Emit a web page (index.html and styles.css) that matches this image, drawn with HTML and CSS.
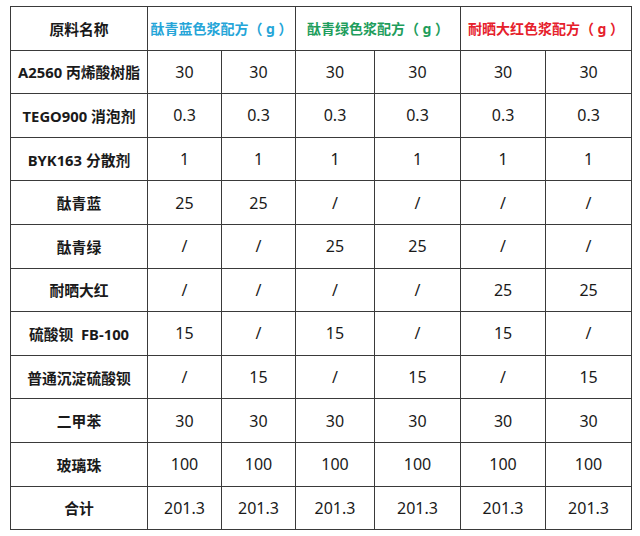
FILE: index.html
```html
<!DOCTYPE html>
<html lang="zh-CN">
<head>
<meta charset="utf-8">
<link rel="stylesheet" href="styles.css">
</head>
<body>
<table class="recipe">
  <colgroup>
    <col class="c-name">
    <col class="c1"><col class="c2"><col class="c3"><col class="c4"><col class="c5"><col class="c6">
  </colgroup>
  <thead>
    <tr>
      <th class="name">原料名称</th>
      <th colspan="2" class="head blue">酞青蓝色浆配方（ g ）</th>
      <th colspan="2" class="head green">酞青绿色浆配方（ g ）</th>
      <th colspan="2" class="head red">耐晒大红色浆配方（ g ）</th>
    </tr>
  </thead>
  <tbody>
    <tr><th class="name">A2560 丙烯酸树脂</th><td>30</td><td>30</td><td>30</td><td>30</td><td>30</td><td>30</td></tr>
    <tr><th class="name">TEGO900 消泡剂</th><td>0.3</td><td>0.3</td><td>0.3</td><td>0.3</td><td>0.3</td><td>0.3</td></tr>
    <tr><th class="name">BYK163 分散剂</th><td>1</td><td>1</td><td>1</td><td>1</td><td>1</td><td>1</td></tr>
    <tr><th class="name">酞青蓝</th><td>25</td><td>25</td><td>/</td><td>/</td><td>/</td><td>/</td></tr>
    <tr><th class="name">酞青绿</th><td>/</td><td>/</td><td>25</td><td>25</td><td>/</td><td>/</td></tr>
    <tr><th class="name">耐晒大红</th><td>/</td><td>/</td><td>/</td><td>/</td><td>25</td><td>25</td></tr>
    <tr><th class="name">硫酸钡&nbsp; FB-100</th><td>15</td><td>/</td><td>15</td><td>/</td><td>15</td><td>/</td></tr>
    <tr><th class="name">普通沉淀硫酸钡</th><td>/</td><td>15</td><td>/</td><td>15</td><td>/</td><td>15</td></tr>
    <tr><th class="name">二甲苯</th><td>30</td><td>30</td><td>30</td><td>30</td><td>30</td><td>30</td></tr>
    <tr><th class="name">玻璃珠</th><td>100</td><td>100</td><td>100</td><td>100</td><td>100</td><td>100</td></tr>
    <tr><th class="name">合计</th><td>201.3</td><td>201.3</td><td>201.3</td><td>201.3</td><td>201.3</td><td>201.3</td></tr>
  </tbody>
</table>
</body>
</html>
```
FILE: styles.css
```css
html, body {
  margin: 0;
  padding: 0;
  background: #ffffff;
}
body {
  padding: 6px 0 0 10px;
  font-family: "Noto Sans", "Noto Sans CJK SC", sans-serif;
  color: #1a1a1a;
}
.recipe {
  border-collapse: collapse;
  table-layout: fixed;
  width: 622px;
  font-size: 16px;
}
.c-name { width: 137px; }
.c1 { width: 74px; }
.c2 { width: 74px; }
.c3 { width: 79px; }
.c4 { width: 86px; }
.c5 { width: 85px; }
.c6 { width: 86px; }
.recipe th,
.recipe td {
  border: 1px solid #3a3a3a;
  height: 42.6px;
  padding: 0;
  text-align: center;
  vertical-align: middle;
  white-space: nowrap;
}
.recipe td {
  font-weight: 400;
}
.recipe th {
  font-weight: 700;
}
.recipe .name {
  font-size: 14.8px;
}
.recipe .head {
  font-size: 14px;
}
.blue { color: #25a5d8; }
.green { color: #1e9d5c; }
.red { color: #e6202b; }
```
